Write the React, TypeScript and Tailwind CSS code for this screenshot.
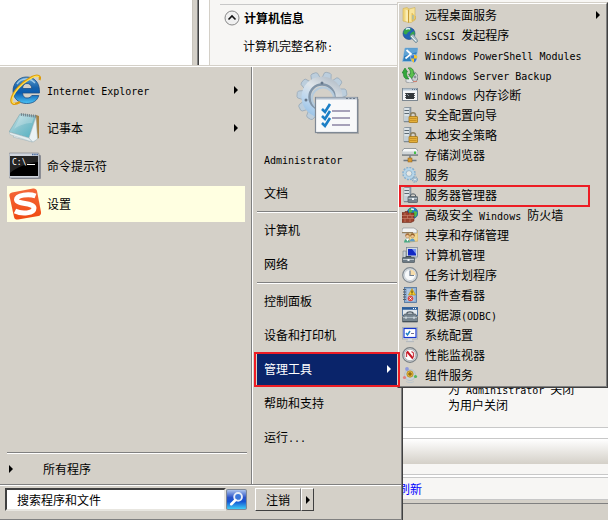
import type { ReactNode } from "react";

const CJK = "font-['Noto_Sans_CJK_SC','Liberation_Sans',sans-serif]";

/* Latin runs are set in a monospace face half as wide as a Chinese glyph */
function Label({ text }: { text: string }) {
  return (
    <span className="whitespace-pre">
      {text.split(/([\x20-\x7e]+)/).map((part, i) =>
        i % 2 === 1 ? (
          <span key={i} className="font-['DejaVu_Sans_Mono',monospace] text-[10px]">
            {part}
          </span>
        ) : (
          part
        ),
      )}
    </span>
  );
}

function Arrow({ className = "" }: { className?: string }) {
  return (
    <svg viewBox="0 0 4 8" className={`w-1 h-2 shrink-0 ${className}`} fill="currentColor">
      <path d="M0 0L4 4L0 8Z" />
    </svg>
  );
}

function Separator() {
  return <div className="h-0.5 border-t border-b border-t-[#808080] border-b-white" />;
}

/* ---------- large icons ---------- */

function ExplorerIcon() {
  return (
    <svg viewBox="0 0 32 32" className="w-8 h-8 shrink-0">
      <defs>
        <linearGradient id="ie" x1="0" y1="0" x2="0" y2="1">
          <stop offset="0" stopColor="#5d9fd0" />
          <stop offset=".4" stopColor="#1763ac" />
          <stop offset=".6" stopColor="#0b5cb0" />
          <stop offset="1" stopColor="#4cc4f6" />
        </linearGradient>
      </defs>
      <path
        d="M30.500 19H13.500C13.800 22.500 15.500 24 18 24C20.500 24 22 23 22.800 21.500H29.800C28 27 24 29.500 17.500 29.500C10 29.500 4 24.500 4 17C4 9 10 3 17.500 3C25.500 3 31 8.500 30.500 19ZM13.500 14.500H22.800C22.500 11 20.500 9.500 18 9.500C15.500 9.500 13.800 11 13.500 14.500Z"
        fill="url(#ie)"
        stroke="#1c4f86"
        strokeWidth=".8"
      />
      <path d="M8 10C12 4 21 3 26 9" fill="none" stroke="#b8dcf2" strokeWidth="1.400" opacity=".8" />
      <path
        d="M30.500 6C32 2 29 0 23 3C13 8 4 18 2.500 25C1.500 30 5 31.500 11 28"
        fill="none"
        stroke="#dd9c0c"
        strokeWidth="2.200"
      />
      <path d="M30 3C28 1 24 3 21 5C12 10 4 19 3 26C3 28 4 29.500 6 29.500" fill="none" stroke="#ffe052" strokeWidth="1.200" />
    </svg>
  );
}

function NotepadIcon() {
  return (
    <svg viewBox="0 0 32 32" className="w-8 h-8 shrink-0">
      <defs>
        <linearGradient id="pad" x1="0" y1="0" x2="1" y2="1">
          <stop offset="0" stopColor="#cfe6ea" />
          <stop offset=".5" stopColor="#84c2cd" />
          <stop offset="1" stopColor="#4fb0c2" />
        </linearGradient>
      </defs>
      <path d="M27 3L30 4V26L25 29L22 27Z" fill="#a98545" />
      <path d="M26 4L28 27L24 30L4 25Z" fill="#f5f8f8" stroke="#9db2b8" strokeWidth=".6" />
      <path d="M11 2L27 4L20 26L0 20Z" fill="url(#pad)" stroke="#7aa4ad" strokeWidth=".6" />
      <path d="M0 20L20 26L23 30L1 22.500Z" fill="#e4eef0" stroke="#a0b4ba" strokeWidth=".5" />
      <path d="M27 5L20 26L24 30L28.500 27Z" fill="#eaf2f4" stroke="#a0b4ba" strokeWidth=".5" />
      <path d="M5 17C12 12 19 11 23 11L25 5L12 3Z" fill="#fff" opacity=".22" />
      <path d="M12 2.500L28 4.500" stroke="#76828a" strokeWidth="3" strokeDasharray="1 1" />
    </svg>
  );
}

function ConsoleIcon() {
  return (
    <svg viewBox="0 0 32 32" className="w-8 h-8 shrink-0">
      <rect x="2" y="5" width="30" height="24" rx="1" fill="#8b8d94" />
      <rect x="0" y="3" width="30" height="25" rx="1" fill="#cfd4dc" stroke="#73777f" strokeWidth=".6" />
      <rect x="1" y="6" width="28" height="20" fill="#000" />
      <path d="M1 6H29V12C18 13 8 17 1 23Z" fill="#fff" opacity=".14" />
      <path d="M23 4.500H29" stroke="#4e6da0" strokeWidth="1.500" strokeDasharray="1.500 .7" />
      <text x="3" y="15" fill="#fff" fontSize="8" fontFamily="DejaVu Sans Mono, monospace">
        C:\
      </text>
      <path d="M18 14.500H26" stroke="#fff" />
    </svg>
  );
}

function SogouIcon() {
  return (
    <svg viewBox="0 0 32 32" className="w-8 h-8 shrink-0">
      <defs>
        <linearGradient id="sogou" x1="0" y1="0" x2="0" y2="1">
          <stop offset="0" stopColor="#f4683a" />
          <stop offset="1" stopColor="#f04a12" />
        </linearGradient>
      </defs>
      <path
        d="M3 4.500L24 .5C26 .2 27.500 1 28 3L32 24C32.300 26 31.500 27.500 29.500 28L9 31.500C7 31.800 5.500 31 5 29L.5 8C.1 6 1 5 3 4.500Z"
        fill="url(#sogou)"
      />
      <path
        d="M26.500 8C20 5.500 7.500 7 7.500 11.500C7.500 16.500 25 14.500 25 20C25 25.500 13 26.500 6 23"
        fill="none"
        stroke="#fff"
        strokeWidth="5"
      />
    </svg>
  );
}

const TEETH = [14, 46, 79, 112, 145, 178, 211, 243, 276, 309, 341];

function AdminToolsIcon() {
  return (
    <svg viewBox="0 0 64 64" className="w-16 h-16">
      <defs>
        <linearGradient id="gear" x1=".8" y1="0" x2=".2" y2="1">
          <stop offset="0" stopColor="#aeb9c4" />
          <stop offset=".4" stopColor="#dfe5ea" />
          <stop offset=".7" stopColor="#bcd6ee" />
          <stop offset="1" stopColor="#93bfe6" />
        </linearGradient>
      </defs>
      <g fill="#bccedd" stroke="#94a6b6" strokeWidth=".7" strokeLinejoin="round">
        {TEETH.map((a) => (
          <path key={a} d="M22.500 7L23.500 2L25 1H29L30.500 2L31.500 7Z" transform={`rotate(${a} 27 26)`} />
        ))}
      </g>
      <path
        d="M27 5.500A20.500 20.500 0 1 0 27 46.500A20.500 20.500 0 1 0 27 5.500ZM27 15A11 11 0 1 1 27 37A11 11 0 1 1 27 15Z"
        fill="url(#gear)"
        fillRule="evenodd"
      />
      <circle cx="27" cy="26" r="12.500" fill="none" stroke="#8295a8" strokeWidth="2.500" />
      <circle cx="28" cy="27.500" r="11" fill="none" stroke="#b5cbdd" strokeWidth="2" />
      <circle cx="27" cy="12" r="1.500" fill="#66788c" />
      <circle cx="11" cy="29" r="1.500" fill="#66788c" />
      <rect x="22" y="28" width="42" height="35" fill="#88898c" opacity=".5" />
      <rect x="20.500" y="26.500" width="42" height="35" fill="#f8f9fa" stroke="#7f8995" strokeWidth="1.200" />
      <path d="M21 27.500H62" stroke="#b4c0cd" strokeWidth="2" />
      <path d="M51 27.500H61" stroke="#6d7989" strokeWidth="1.200" strokeDasharray="2 1.500" />
      {[40, 47, 54].map((y) => (
        <g key={y}>
          <path d={`M37 ${y}H55`} stroke="#8b83a3" strokeWidth="1.500" />
          <path d={`M27 ${y - 2}L30 ${y + 1}L35 ${y - 7}`} fill="none" stroke="#1c7fc6" strokeWidth="2.600" />
        </g>
      ))}
    </svg>
  );
}

/* ---------- small icons ---------- */

function Small({ children }: { children: ReactNode }) {
  return (
    <svg viewBox="0 0 16 16" className="w-4 h-4 shrink-0">
      {children}
    </svg>
  );
}

function Tower() {
  return (
    <>
      <path d="M2 1L4 0H9V14L7 15H2Z" fill="#8e9ca6" stroke="#75838d" strokeWidth=".5" />
      <rect x="2" y="1" width="5.500" height="14" fill="#c3ced5" />
      <path d="M2.500 3.500H7M2.500 6.500H7" stroke="#5d6a74" />
      <path d="M2.500 2H7M2.500 5H7M2.500 8H7" stroke="#f0f4f6" />
      <path d="M2 14.500H8" stroke="#7d8a93" />
    </>
  );
}

const folder = (
  <Small>
    <path d="M1 1.500L5 .5L7 2V15.500L1 14Z" fill="#f1d67b" stroke="#cfae52" strokeWidth=".6" />
    <path d="M7 2L13 .5V13L9 15.500L6 15Z" fill="#f8e49a" stroke="#cfae52" strokeWidth=".6" />
    <path d="M3.500 2.500L6 3.500V15L3.500 14Z" fill="#f9ecb4" />
    <path d="M6.500 3V15.500" stroke="#c79b35" />
    <path d="M10 6V14L13.500 12V9" fill="#edca62" stroke="#d4ad48" strokeWidth=".6" />
    <path d="M11 8V12.500" stroke="#83b8d8" />
  </Small>
);

const iscsi = (
  <Small>
    <circle cx="7" cy="6.500" r="6" fill="#2263b5" stroke="#164480" strokeWidth=".6" />
    <path d="M3 2C6 0 9 1 9 3C8 5 6 4 5 7C4 8 1 7 1.500 5ZM9 6L12 4C14 8 11 11 9 11C7 9 8 8 9 6Z" fill="#36a749" />
    <path d="M4 2.500C5 1.500 7 1.500 8 2" stroke="#d9f2ff" strokeWidth="1.500" fill="none" />
    <path d="M8 9L11 7L14 11L16 14L14 16L10 12Z" fill="#abc0c9" stroke="#657e8c" strokeWidth=".6" />
    <path d="M9 9L14 14" stroke="#e9f2f5" />
  </Small>
);

const powershell = (
  <Small>
    <path d="M3 1H16L13.500 14.500H.5Z" fill="#2f7fbf" stroke="#9dc0da" strokeWidth=".8" />
    <path d="M3 1.500H15.500L15 5L2 9Z" fill="#5fa2d4" />
    <path d="M4.500 3L9 7L3.500 11.500" fill="none" stroke="#fff" strokeWidth="1.700" />
    <path
      d="M8.500 8.500L12 7.500L15.500 8.500C15.500 12 14.500 14.500 12 16C9.500 14.500 8.500 12 8.500 8.500Z"
      fill="#3a78d0"
      stroke="#e8eef4"
      strokeWidth=".5"
    />
    <path d="M12 7.800V11.500H15C15.300 10.500 15.200 9.500 15.200 8.700ZM12 11.500V15.700C10.500 14.700 9.500 13.500 9 11.500Z" fill="#f5c62c" />
  </Small>
);

const backup = (
  <Small>
    <path d="M4 11L8 9L12 11V15L8 16L4 15Z" fill="#e2e5e8" stroke="#7c8288" strokeWidth=".6" />
    <path d="M10 6L13 5L15.500 8V13L13 15L10 13Z" fill="#c2c6c8" stroke="#6f767b" strokeWidth=".7" />
    <circle cx="13" cy="10" r="2" fill="#8a9298" stroke="#eef0f1" strokeWidth=".7" />
    <path d="M11 14.500H15" stroke="#cf8272" />
    <path d="M0 6L3 1L5.500 5H4.500C4.500 8.500 5 10 7 12C3 12.500 1 10 1.500 6Z" fill="#35a83c" stroke="#1b7a28" strokeWidth=".6" />
    <path d="M6 1C10 0 12 3 11.500 6.500H13L9.500 11.500L6.500 7H8.500C8.500 4 8 2.500 6 1Z" fill="#5bc04e" stroke="#1b7a28" strokeWidth=".6" />
  </Small>
);

const memory = (
  <Small>
    <rect x=".5" y="1.500" width="15" height="12" fill="#f4f6f8" stroke="#7d8790" />
    <path d="M1 2.500H15" stroke="#b7c7d5" strokeWidth="2" />
    <path d="M10 2.500H15" stroke="#5c738e" strokeDasharray="1 1" />
    <rect x="4" y="6" width="8" height="6" fill="#33383c" />
    <path d="M3 6.500H13M3 8.500H13M3 10.500H13" stroke="#33383c" strokeWidth=".8" />
    <path d="M5 7L7 9" stroke="#85909a" />
  </Small>
);

const lockedTower = (
  <Small>
    <Tower />
    <path d="M8.500 10V8C8.500 5 13.500 5 13.500 8V10" fill="none" stroke="#8a7f60" strokeWidth="1.500" />
    <rect x="7" y="9.500" width="8.500" height="6" rx=".5" fill="#e5b03a" stroke="#9d6f10" strokeWidth=".7" />
    <path d="M8 11.500H14.500M8 13.500H14.500" stroke="#c08a20" strokeWidth=".8" />
  </Small>
);

const storage = (
  <Small>
    <path d="M2 1.500H14L16 4V8H0V4Z" fill="#f6f7f8" stroke="#767d83" strokeWidth=".7" />
    <path d="M.5 4.500H15.500V8H.5Z" fill="#cfd4d7" />
    <path d="M0 8H16" stroke="#5f676d" />
    <rect x="12" y="4.500" width="2" height="2.500" fill="#43c048" />
    <path d="M8 8.500V12M1.500 13.500H14.500" stroke="#707a82" strokeWidth="1.500" />
    <rect x="6" y="11" width="4" height="4" fill="#d99b35" stroke="#8c5c10" strokeWidth=".5" />
  </Small>
);

const services = (
  <Small>
    <circle cx="7" cy="6.500" r="5.800" fill="none" stroke="#86b0d0" strokeWidth="2" strokeDasharray="1.900 1.100" />
    <circle cx="7" cy="6.500" r="4.200" fill="none" stroke="#b5d5ea" strokeWidth="2.400" />
    <circle cx="7" cy="6.500" r="2.900" fill="#e8e8e4" stroke="#7ba6c6" strokeWidth=".7" />
    <circle cx="13" cy="12.500" r="2.500" fill="none" stroke="#88a9c3" strokeWidth="1.400" strokeDasharray="1.300 .7" />
    <circle cx="13" cy="12.500" r="1.400" fill="#e4eef4" stroke="#9dbdd2" />
  </Small>
);

const manager = (
  <Small>
    <Tower />
    <path d="M8.500 9.500V8C8.500 6.500 13.500 6.500 13.500 8V9.500" fill="none" stroke="#4f5a63" />
    <rect x="6" y="9.500" width="9.500" height="6" rx=".8" fill="#77858f" stroke="#4a565f" strokeWidth=".7" />
    <path d="M6.500 11.500H15" stroke="#b3bfc7" />
    <rect x="10" y="11" width="2" height="2" fill="#eef2f4" />
  </Small>
);

const firewall = (
  <Small>
    <circle cx="10.500" cy="6" r="5.500" fill="#1d7cc4" stroke="#125084" strokeWidth=".5" />
    <path d="M7 2L11 1L10 5L7 7ZM12 4L15.500 5L14 10L11 9Z" fill="#53b948" />
    <path d="M9 2L12 2.500" stroke="#dff4ff" strokeWidth="1.500" />
    <path d="M0 5.500H3V4.500H6V6H12V14L9 15.500H0Z" fill="#9c432e" stroke="#602011" strokeWidth=".5" />
    <path
      d="M0 8.500H12M0 11.500H12M3 6V8.500M8 6V8.500M5.500 8.500V11.500M10 8.500V11.500M3 11.500V15M8 11.500V15"
      stroke="#cf8a72"
      strokeWidth=".6"
    />
  </Small>
);

const share = (
  <Small>
    <path d="M6 4L14 3L16 4V14L8 15Z" fill="#f1d890" stroke="#c4a050" strokeWidth=".6" />
    <path d="M1 1H12L15 3V6H0V3Z" fill="#f2f3f3" stroke="#858b90" strokeWidth=".6" />
    <path d="M0 5.500H11" stroke="#94805f" />
    <circle cx="5.500" cy="8.500" r="2.200" fill="#a8713c" />
    <circle cx="5.500" cy="9.300" r="1.400" fill="#f0c99a" />
    <circle cx="10.500" cy="8.500" r="2.200" fill="#94612c" />
    <circle cx="10.500" cy="9.300" r="1.400" fill="#efc48e" />
    <path d="M2 15.500C2.500 10.500 7 10.500 8 15.500Z" fill="#4aa883" />
    <path d="M7.500 14.500C8.500 10.500 12.500 10.500 13 14.500Z" fill="#5f9dc8" />
    <path d="M4 12L5.500 14.500L7 12" fill="#fff" />
  </Small>
);

const computer = (
  <Small>
    <rect x="4.500" y=".5" width="11" height="9.500" fill="#d2dae1" stroke="#747f8a" strokeWidth=".7" />
    <rect x="6" y="2" width="8" height="6.500" fill="#1229c4" />
    <path d="M10 2H14V7Z" fill="#7995f0" />
    <path d="M1 4H4V11H1Z" fill="#c9d1d7" stroke="#6f7981" strokeWidth=".6" />
    <path d="M12 10H14.500V12H12Z" fill="#a8b1b8" />
    <path d="M4 10.500V9.500H9V10.500" fill="none" stroke="#3e4a52" />
    <rect x=".5" y="10.500" width="12" height="5" rx=".5" fill="#6c7a84" stroke="#3e4a52" strokeWidth=".6" />
    <path d="M1 12.500H12" stroke="#b9c5cc" />
    <rect x="5.500" y="12" width="2" height="2" fill="#edf1f3" />
  </Small>
);

const clock = (
  <Small>
    <circle cx="8" cy="8" r="7.300" fill="#dfe3e6" stroke="#818a91" strokeWidth="1.200" />
    <circle cx="8" cy="8" r="5.600" fill="#f7f9fa" stroke="#bcc6ce" strokeWidth=".7" />
    <path d="M8 8V2.500A5.500 5.500 0 0 1 13.500 8Z" fill="#f6dcab" />
    <path d="M8 3.500V8.500H12" fill="none" stroke="#6f7f92" strokeWidth="1.200" />
  </Small>
);

const events = (
  <Small>
    <rect x="2.500" y=".5" width="12" height="15" fill="#8fb0d4" stroke="#4d7099" strokeWidth=".8" />
    <path d="M5 3H12.500M5 5H12.500M5 7H12.500M5 9H12.500M5 11H12.500M5 13H12.500" stroke="#dbe7f2" strokeWidth=".9" />
    <path d="M1 2.500H4M1 5H4M1 7.500H4M1 10H4M1 12.500H4" stroke="#56616c" />
    <path d="M10 1.500L13.500 8H6.500Z" fill="#fbd02d" stroke="#b48612" strokeWidth=".6" />
    <path d="M10 3.500V6M10 6.500V7.500" stroke="#332b09" />
    <circle cx="8.500" cy="11.500" r="2.800" fill="#d84a45" />
    <path d="M7.500 10.500L9.500 12.500M9.500 10.500L7.500 12.500" stroke="#fff" />
  </Small>
);

const odbc = (
  <Small>
    <rect x=".4" y=".4" width="15.200" height="8" fill="#e4eaee" stroke="#386191" strokeWidth=".8" />
    <path d="M0 1.500H16" stroke="#2c5f9c" strokeWidth="2.500" />
    <path d="M11 1.500H15" stroke="#fff" strokeDasharray="1 1" />
    <path d="M5 7.500V6C5 4.500 11 4.500 11 6V7.500" fill="none" stroke="#4a565f" strokeWidth="1.200" />
    <path d="M2.500 7H13.500L15.500 10V15H.5V10Z" fill="#77858f" stroke="#4d5962" strokeWidth=".7" />
    <path d="M1 10.500H15" stroke="#aebbc3" strokeWidth="1.200" />
    <path d="M4 9.500V12M12 9.500V12" stroke="#e3e9ec" />
    <path d="M1 14.500H15" stroke="#46525b" />
  </Small>
);

const config = (
  <Small>
    <rect x=".5" y=".5" width="15" height="11.500" fill="#e9ecee" stroke="#a6adb3" strokeWidth=".8" />
    <rect x="2" y="1.500" width="12" height="9" fill="#fff" stroke="#1737cf" strokeWidth="1.200" />
    <path d="M4 6L5.500 8L8 4" fill="none" stroke="#2482c6" strokeWidth="1.500" />
    <path d="M9 6.500H12" stroke="#736f93" />
    <path d="M6 12H10V14H6Z" fill="#d7dbde" />
    <path d="M4 14.500H12" stroke="#b5babf" strokeWidth="1.300" />
  </Small>
);

const monitor = (
  <Small>
    <circle cx="8" cy="8" r="7.300" fill="#d5d9db" stroke="#777e83" strokeWidth="1.200" />
    <circle cx="8" cy="8" r="5.700" fill="#fff" stroke="#9ba2a6" strokeWidth=".7" />
    <path d="M4.500 10V6L6 4.500M9.500 4.500L11.500 6V10" fill="none" stroke="#c9404a" strokeWidth="1.300" />
    <path d="M5 4.500L11 11.500" stroke="#c71825" strokeWidth="2" />
  </Small>
);

const component = (
  <Small>
    <circle cx="8" cy="8" r="5.500" fill="#cbd3d9" stroke="#b9c3ca" />
    <circle cx="8" cy="7" r="3.200" fill="#e6b63c" stroke="#a8831f" strokeWidth=".7" />
    <path d="M8 5V9M6 7H10" stroke="#6b4d08" strokeWidth=".9" />
    <circle cx="5" cy="2" r="1.900" fill="#8d98dc" />
    <circle cx="2.500" cy="10.500" r="1.600" fill="#e07f7f" />
    <circle cx="13.500" cy="9.500" r="1.600" fill="#54b45c" />
    <path d="M4 14.500C6 16 10 16 12 14.500" fill="none" stroke="#bcc6cc" />
  </Small>
);

/* ---------- data ---------- */

const PROGRAMS = [
  { name: "Internet Explorer", icon: <ExplorerIcon />, more: true, active: false },
  { name: "记事本", icon: <NotepadIcon />, more: true, active: false },
  { name: "命令提示符", icon: <ConsoleIcon />, more: false, active: false },
  { name: "设置", icon: <SogouIcon />, more: false, active: true },
];

const PLACES = [
  ["Administrator", "文档"],
  ["计算机", "网络"],
  ["控制面板", "设备和打印机", "管理工具", "帮助和支持", "运行..."],
];

const TOOLS = [
  { name: "远程桌面服务", icon: folder },
  { name: "iSCSI 发起程序", icon: iscsi },
  { name: "Windows PowerShell Modules", icon: powershell },
  { name: "Windows Server Backup", icon: backup },
  { name: "Windows 内存诊断", icon: memory },
  { name: "安全配置向导", icon: lockedTower },
  { name: "本地安全策略", icon: lockedTower },
  { name: "存储浏览器", icon: storage },
  { name: "服务", icon: services },
  { name: "服务器管理器", icon: manager },
  { name: "高级安全 Windows 防火墙", icon: firewall },
  { name: "共享和存储管理", icon: share },
  { name: "计算机管理", icon: computer },
  { name: "任务计划程序", icon: clock },
  { name: "事件查看器", icon: events },
  { name: "数据源(ODBC)", icon: odbc },
  { name: "系统配置", icon: config },
  { name: "性能监视器", icon: monitor },
  { name: "组件服务", icon: component },
];

/* ---------- windows ---------- */

function ServerManagerWindow() {
  return (
    <div className="flex h-screen bg-white">
      <div className="w-[193px] shrink-0 border-r border-[#c8c4bc]" />
      <div className="w-1 shrink-0 bg-[#d4d0c8]" />
      <div className="w-0.5 shrink-0 border-l border-[#808080] bg-[#404040]" />
      <div className="flex flex-1 flex-col pl-2.5">
        <main className="flex flex-1 flex-col border-l border-[#d4d0c8] bg-[#f7f6f4]">
          <section className="ml-2.5 mt-1 border-t border-[#c8c8c8] pt-1">
            <h2>
              <button className="flex h-[18px] items-center gap-1 pl-1 font-bold">
                <svg viewBox="0 0 16 16" className="w-4 h-4">
                  <circle cx="8" cy="8" r="7" fill="#f0f0f0" stroke="#888" />
                  <path d="M4.500 9.500L8 6L11.500 9.500" fill="none" stroke="#111" strokeWidth="1.600" />
                </svg>
                <Label text="计算机信息" />
              </button>
            </h2>
            <p className="mt-2.5 pl-[23px] leading-[18px]">
              <Label text="计算机完整名称:" />
            </p>
          </section>
          <div className="mt-auto pb-[15px] pl-[238px] leading-[14px]">
            <p>
              <Label text="为 Administrator 关闭" />
            </p>
            <p>
              <Label text="为用户关闭" />
            </p>
          </div>
        </main>
        <div className="h-3 border-y border-[#c8c8c8] bg-white" />
        <div className="h-[25px] bg-linear-to-b from-white to-[#d4d0c8]" />
        <div className="h-[11px] border-b border-[#c8c8c8] bg-[#f7f6f4]" />
        <div className="mt-0.5 flex h-[23px] items-center border-y border-[#c8c8c8] bg-[#f7f6f4] pl-[189px]">
          <a href="#refresh" className="text-[#0000ff]">
            刷新
          </a>
        </div>
        <div className="h-1 border-b border-[#808080] bg-[#d4d0c8]" />
        <div className="h-4 bg-[#d4d0c8]" />
      </div>
    </div>
  );
}

function StartMenu() {
  return (
    <nav className="absolute bottom-0 left-0 top-[65px] flex w-[403px] flex-col border-r border-t border-r-[#404040] border-t-[#d4d0c8] bg-[#d4d0c8]">
      <div className="flex flex-1 flex-col border-b border-r border-t border-[#808080] border-t-white">
        <div className="flex flex-1">
          <div className="flex w-[252px] flex-col border-r border-[#808080] pl-[7px] pr-1 pt-[5px]">
            <div className="flex flex-col gap-0.5 pr-0.5">
              {PROGRAMS.map((p) => (
                <button
                  key={p.name}
                  className={`flex h-9 items-center gap-1.5 pl-0.5 pr-[7px] text-left ${p.active ? "bg-[#ffffe1]" : ""}`}
                >
                  {p.icon}
                  <Label text={p.name} />
                  {p.more && <Arrow className="ml-auto" />}
                </button>
              ))}
            </div>
            <div className="mt-auto">
              <Separator />
              <button className="flex h-[30px] w-full items-center gap-[30px] pl-0.5 text-left">
                <Arrow />
                <Label text="所有程序" />
              </button>
            </div>
          </div>

          <div className="flex-1 border-l border-white pl-1 pr-1">
            <div className="flex h-[75px] justify-center pt-1">
              <AdminToolsIcon />
            </div>
            {PLACES.map((group, i) => (
              <div key={i}>
                {i > 0 && (
                  <div className="pt-px">
                    <Separator />
                  </div>
                )}
                {group.map((name) =>
                  name === "管理工具" ? (
                    <div key={name} className="py-px">
                      <button className="flex h-8 w-full items-center justify-between bg-[#0a246a] pl-[7px] pr-1.5 text-left text-white">
                        <Label text={name} />
                        <Arrow />
                      </button>
                    </div>
                  ) : (
                    <button key={name} className="flex h-[34px] w-full items-center px-[7px] text-left">
                      <Label text={name} />
                    </button>
                  ),
                )}
              </div>
            ))}
          </div>
        </div>

        <form className="flex h-[35px] items-start border-t border-[#808080] pl-[5px] pt-[3px] shadow-[inset_0_1px_0_#fff]">
          <input
            type="text"
            aria-label="搜索程序和文件"
            defaultValue="搜索程序和文件"
            className="h-[23px] w-[221px] border-2 border-b-[#e8e6e0] border-l-[#404040] border-r-[#e8e6e0] border-t-[#404040] bg-white px-2.5 outline-none"
          />
          <button type="button" aria-label="搜索" className="mt-px">
            <svg viewBox="0 0 20 20" className="h-[21px] w-[21px]">
              <defs>
                <linearGradient id="search" x1="0" y1="0" x2="0" y2="1">
                  <stop offset="0" stopColor="#b4cbf0" />
                  <stop offset=".4" stopColor="#2a52c8" />
                  <stop offset=".6" stopColor="#1355d4" />
                  <stop offset="1" stopColor="#43d4f8" />
                </linearGradient>
              </defs>
              <rect x=".5" y=".5" width="19" height="19" rx="1.500" fill="url(#search)" stroke="#7e8796" />
              <circle cx="11.500" cy="7.500" r="3.700" fill="#3a77db" stroke="#e8eef8" strokeWidth="1.800" />
              <path d="M9 10.500L5 14.500" stroke="#fff" strokeWidth="2.500" strokeLinecap="round" />
            </svg>
          </button>
          <button
            type="button"
            className="ml-2 h-[23px] w-[46px] border border-b-[#404040] border-l-white border-r-[#808080] border-t-white"
          >
            注销
          </button>
          <button
            type="button"
            aria-label="更多选项"
            className="flex h-[23px] w-[13px] items-center justify-center border border-b-[#404040] border-l-white border-r-[#404040] border-t-white"
          >
            <Arrow />
          </button>
        </form>
      </div>
    </nav>
  );
}

function ToolsMenu() {
  return (
    <div className="absolute left-[397px] right-0 top-0.5 border border-b-[#404040] border-l-[#d4d0c8] border-r-[#404040] border-t-[#d4d0c8]">
      <div className="border border-b-[#808080] border-l-white border-r-[#808080] border-t-white bg-[#d4d0c8] py-px">
        {TOOLS.map((t, i) => (
          <button
            key={t.name}
            className="relative flex h-5 w-full items-center gap-[7px] pl-[3px] pr-1.5 text-left"
          >
            {t.icon}
            <Label text={t.name} />
            {i === 0 && <Arrow className="ml-auto" />}
            {t.name === "服务器管理器" && (
              <span className="absolute left-0 right-4 top-0 h-[22px] border-2 border-[#ed1c24]" />
            )}
          </button>
        ))}
      </div>
    </div>
  );
}

export default function App() {
  return (
    <div className={`relative min-h-screen overflow-hidden text-[12px] text-black ${CJK}`}>
      <ServerManagerWindow />
      <StartMenu />
      <ToolsMenu />
      {/* Marker round the open menu entry, drawn over both menus */}
      <div className="pointer-events-none absolute left-[254px] top-[352px] h-[35px] w-[146px] border-2 border-[#ed1c24]" />
    </div>
  );
}
